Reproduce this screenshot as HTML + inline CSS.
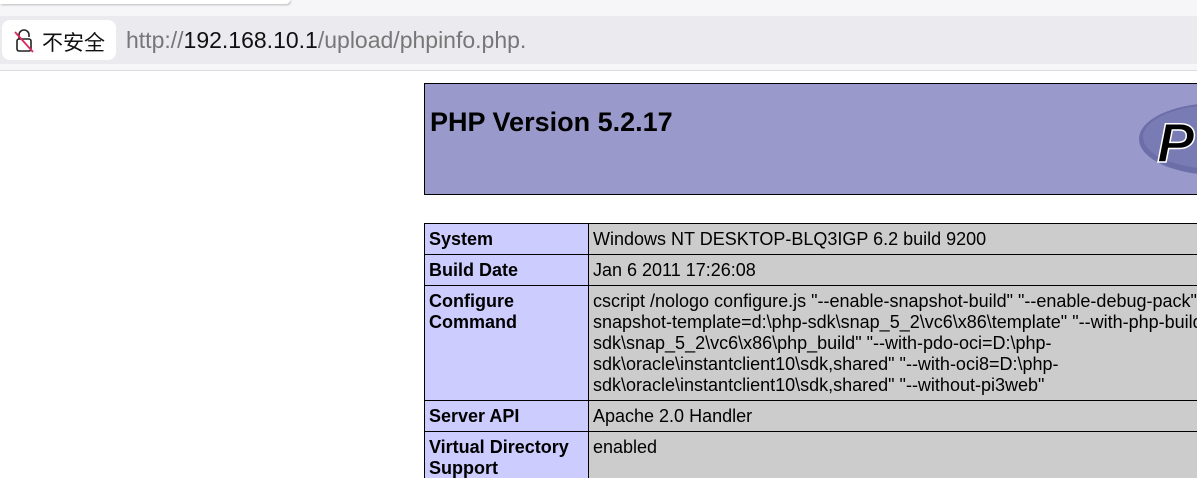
<!DOCTYPE html>
<html><head><meta charset="utf-8"><style>
body{margin:0;width:1197px;height:478px;overflow:hidden;background:#fff;font-family:"Liberation Sans",Arial,sans-serif;position:relative}
.top{position:absolute;left:0;top:0;width:1197px;height:70px;background:#f6f6f8;border-bottom:1px solid #dcdce0}
.tab{position:absolute;left:0;top:0;width:290px;height:4px;background:#fff;border-radius:0 0 10px 0;box-shadow:1px 1px 2px #bbb}
.bar{position:absolute;left:0;top:16px;width:1197px;height:48px;background:#ebebef}
.sec{position:absolute;left:2px;top:20px;width:114px;height:40px;background:#fff;border-radius:8px}
.sec span{position:absolute;left:40px;top:7px;font-size:21px;font-family:"Liberation Sans","Noto Sans CJK SC",sans-serif;color:#111}
.url{position:absolute;left:126px;top:27px;font-size:23px;color:#777}
.url b{font-weight:normal;color:#111}
.wrap{position:absolute;left:424px;top:83px;width:773px;height:395px;overflow:hidden}
.hdr{position:absolute;left:0;top:0;width:800px;height:110px;background:#9999cc;border:1px solid #000}
.hdr h1{position:absolute;left:5px;top:23px;margin:0;font-size:27px;font-weight:bold}
table{position:absolute;left:0;top:140px;border-collapse:collapse;width:1000px;table-layout:fixed;font-size:18px}
td{border:1px solid #000;vertical-align:top;padding:5px 4px 4px 4px;line-height:21px;white-space:nowrap;overflow:hidden}
td.e{background:#ccccff;font-weight:bold;white-space:normal}
td.v{background:#cccccc}
</style></head><body>
<div class="top"><div class="tab"></div><div class="bar"></div>
<div class="sec"><svg style="position:absolute;left:12px;top:9px" width="22" height="24" viewBox="0 0 22 24"><path d="M5 10V6a5 5 0 0 1 10 0v2" fill="none" stroke="#222" stroke-width="1.6"/><rect x="3" y="10" width="14" height="12" rx="2" fill="none" stroke="#222" stroke-width="1.6"/><path d="M1 3L19 23" stroke="#e0245e" stroke-width="1.8"/></svg><span>不安全</span></div>
<div class="url">http://<b>192.168.10.1</b>/upload/phpinfo.php.</div></div>
<div class="wrap">
<div class="hdr"><h1>PHP Version 5.2.17</h1>
<svg style="position:absolute;left:712px;top:10px" width="90" height="90" viewBox="0 0 90 90"><ellipse cx="80" cy="45" rx="78" ry="36" fill="#6c6ea8"/><ellipse cx="80" cy="43" rx="74" ry="32" fill="#8587bf" opacity=".5"/><text x="20" y="68" font-size="56" font-weight="bold" font-style="italic" fill="#000" stroke="#fff" stroke-width="1.5">P</text></svg></div>
<table>
<colgroup><col style="width:164px"><col></colgroup>
<tr><td class="e">System</td><td class="v">Windows NT DESKTOP-BLQ3IGP 6.2 build 9200</td></tr>
<tr><td class="e">Build Date</td><td class="v">Jan 6 2011 17:26:08</td></tr>
<tr><td class="e">Configure Command</td><td class="v">cscript /nologo configure.js "--enable-snapshot-build" "--enable-debug-pack" "--with-<br>snapshot-template=d:\php-sdk\snap_5_2\vc6\x86\template" "--with-php-build=d:\php-<br>sdk\snap_5_2\vc6\x86\php_build" "--with-pdo-oci=D:\php-<br>sdk\oracle\instantclient10\sdk,shared" "--with-oci8=D:\php-<br>sdk\oracle\instantclient10\sdk,shared" "--without-pi3web"</td></tr>
<tr><td class="e">Server API</td><td class="v">Apache 2.0 Handler</td></tr>
<tr><td class="e">Virtual Directory Support</td><td class="v">enabled</td></tr>
</table>
</div>
</body></html>
